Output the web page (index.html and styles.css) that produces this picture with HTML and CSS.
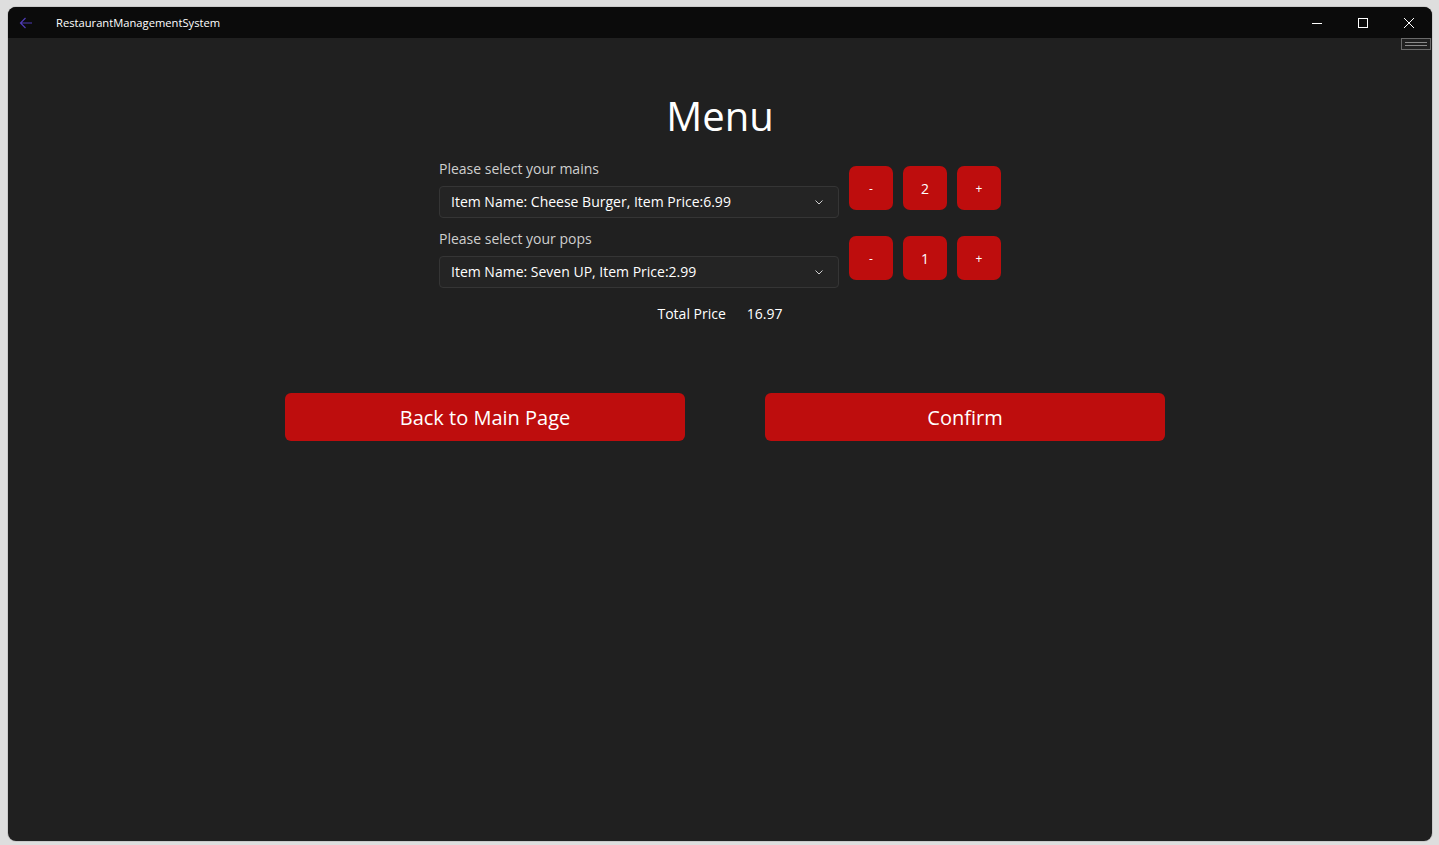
FILE: index.html
```html
<!DOCTYPE html>
<html>
<head>
<meta charset="utf-8">
<link rel="stylesheet" href="styles.css">
</head>
<body>
<div class="window">
  <div class="titlebar">
    <div class="tb-left">
      <svg class="back" width="16" height="16" viewBox="0 0 16 16"><path d="M14 8H2.5M7.5 3L2.5 8l5 5" fill="none" stroke="#4f3bb5" stroke-width="1.2"/></svg>
      <span class="app-title">RestaurantManagementSystem</span>
    </div>
    <div class="controls">
      <div class="ctl"><svg width="10" height="10" viewBox="0 0 10 10"><path d="M0 5.5h10" stroke="#fff" stroke-width="1"/></svg></div>
      <div class="ctl"><svg width="10" height="10" viewBox="0 0 10 10"><rect x="0.5" y="0.5" width="9" height="9" fill="none" stroke="#fff" stroke-width="1"/></svg></div>
      <div class="ctl"><svg width="10" height="10" viewBox="0 0 10 10"><path d="M0 0L10 10M10 0L0 10" stroke="#fff" stroke-width="1"/></svg></div>
    </div>
  </div>
  <div class="content">
    <div class="debug-tag"><span></span><span></span></div>
    <h1 class="heading">Menu</h1>
    <div class="form">
      <div class="row">
        <div class="field">
          <label class="label">Please select your mains</label>
          <div class="combo"><span>Item Name: Cheese Burger, Item Price:6.99</span>
            <svg width="10" height="10" viewBox="0 0 10 10"><path d="M1.5 3.5L5 7l3.5-3.5" fill="none" stroke="#cfcfcf" stroke-width="1"/></svg></div>
        </div>
        <div class="stepper">
          <div class="sbtn small">-</div>
          <div class="sbtn">2</div>
          <div class="sbtn small">+</div>
        </div>
      </div>
      <div class="row">
        <div class="field">
          <label class="label">Please select your pops</label>
          <div class="combo"><span>Item Name: Seven UP, Item Price:2.99</span>
            <svg width="10" height="10" viewBox="0 0 10 10"><path d="M1.5 3.5L5 7l3.5-3.5" fill="none" stroke="#cfcfcf" stroke-width="1"/></svg></div>
        </div>
        <div class="stepper">
          <div class="sbtn small">-</div>
          <div class="sbtn">1</div>
          <div class="sbtn small">+</div>
        </div>
      </div>
      <div class="total"><span>Total Price</span><span>16.97</span></div>
    </div>
    <div class="actions">
      <button class="big">Back to Main Page</button>
      <button class="big">Confirm</button>
    </div>
  </div>
</div>
</body>
</html>
```

FILE: styles.css
```css
html, body {
  margin: 0;
  padding: 0;
  height: 100%;
}
body {
  background: #dedede;
  font-family: "Open Sans", "Noto Sans", sans-serif;
  padding: 7px 7px 4px 8px;
  box-sizing: border-box;
  height: 845px;
  overflow: hidden;
}
.window {
  width: 1424px;
  height: 834px;
  background: #202020;
  border-radius: 8px;
  overflow: hidden;
  display: flex;
  flex-direction: column;
  box-shadow: 0 0 0 1px #c9c9c9;
}
.titlebar {
  height: 31px;
  background: #0b0b0b;
  display: flex;
  justify-content: space-between;
  align-items: stretch;
  flex-shrink: 0;
}
.tb-left {
  display: flex;
  align-items: center;
  padding-left: 10px;
}
.back {
  margin-right: 22px;
}
.app-title {
  color: #fff;
  font-size: 11.2px;
  font-family: "Open Sans", sans-serif;
}
.controls {
  display: flex;
}
.ctl {
  width: 46px;
  display: flex;
  align-items: center;
  justify-content: center;
}
.content {
  flex: 1;
  position: relative;
  display: flex;
  flex-direction: column;
  align-items: center;
}
.debug-tag {
  position: absolute;
  top: 0;
  right: 1px;
  width: 30px;
  height: 12px;
  border: 1px solid #6a6a6a;
  display: flex;
  flex-direction: column;
  justify-content: center;
  gap: 2px;
  padding: 0 3px;
  box-sizing: border-box;
}
.debug-tag span {
  display: block;
  height: 1px;
  background: #8a8a8a;
}
.heading {
  margin: 48px 0 0 0;
  font-weight: 400;
  font-size: 40px;
  line-height: 60px;
  color: #fff;
}
.form {
  margin-top: 12px;
  width: 562px;
  display: flex;
  flex-direction: column;
  gap: 10px;
}
.row {
  display: flex;
  align-items: center;
  gap: 10px;
}
.field {
  display: flex;
  flex-direction: column;
  gap: 8px;
}
.label {
  color: #cfcfcf;
  font-size: 14px;
  line-height: 20px;
  padding-top: 1px;
  margin-bottom: -1px;
}
.combo {
  width: 400px;
  height: 32px;
  box-sizing: border-box;
  border: 1px solid #353535;
  border-radius: 4px;
  background: #242424;
  display: flex;
  align-items: center;
  justify-content: space-between;
  padding: 0 14px 2px 11px;
  color: #fff;
  font-size: 14px;
}
.combo svg {
  margin-top: 2px;
}
.stepper {
  display: flex;
  gap: 10px;
}
.sbtn {
  width: 44px;
  height: 44px;
  border-radius: 7px;
  background: #be0d0d;
  color: #fff;
  display: flex;
  align-items: center;
  justify-content: center;
  font-size: 14px;
}
.sbtn.small {
  font-size: 12px;
}
.total {
  margin-top: 6px;
  display: flex;
  justify-content: center;
  gap: 21px;
  color: #fff;
  font-size: 14px;
  line-height: 20px;
}
.actions {
  margin-top: 69px;
  margin-left: 10px;
  display: flex;
  gap: 80px;
}
.big {
  width: 400px;
  height: 48px;
  border: none;
  border-radius: 6px;
  background: #be0d0d;
  color: #fff;
  font-family: "Open Sans", sans-serif;
  font-size: 20px;
  padding: 0;
}
```
